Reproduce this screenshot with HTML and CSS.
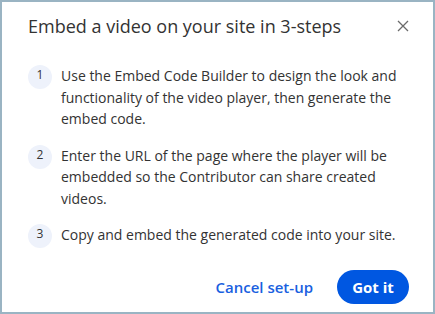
FILE: index.html
```html
<!DOCTYPE html>
<html>
<head>
<meta charset="utf-8">
<link rel="stylesheet" href="styles.css">
</head>
<body>
<div class="frame">
  <div class="header">
    <h1 class="title">Embed a video on your site in 3-steps</h1>
    <button class="close" aria-label="Close">
      <svg width="12" height="12" viewBox="0 0 12 12"><path d="M1 1L11 11M11 1L1 11" stroke="#6b6b6b" stroke-width="1.3" fill="none"/></svg>
    </button>
  </div>
  <ol class="steps">
    <li class="step"><span class="num">1</span><p class="text">Use the Embed Code Builder to design the look and functionality of the video player, then generate the embed code.</p></li>
    <li class="step"><span class="num">2</span><p class="text">Enter the URL of the page where the player will be embedded so the Contributor can share created videos.</p></li>
    <li class="step"><span class="num">3</span><p class="text">Copy and embed the generated code into your site.</p></li>
  </ol>
  <div class="footer">
    <button class="cancel">Cancel set-up</button>
    <button class="ok">Got it</button>
  </div>
</div>
</body>
</html>
```
FILE: styles.css
```css
html, body {
  margin: 0;
  padding: 0;
  background: #ffffff;
}
.frame {
  box-sizing: border-box;
  width: 435px;
  height: 314px;
  border: 2px solid #9ab4c3;
  background: #ffffff;
  font-family: "Open Sans", "Noto Sans", sans-serif;
  color: #333333;
  display: flex;
  flex-direction: column;
}
.header {
  display: flex;
  align-items: center;
  justify-content: space-between;
  padding: 10px 22px 0 26px;
}
.title {
  margin: 0;
  font-size: 18px;
  font-weight: 400;
  line-height: 28px;
  color: #333333;
}
.close {
  border: 0;
  background: none;
  padding: 0;
  width: 16px;
  height: 16px;
  display: flex;
  align-items: center;
  justify-content: center;
  cursor: pointer;
}
.steps {
  list-style: none;
  margin: 0;
  padding: 25px 26px 0 26px;
  display: flex;
  flex-direction: column;
  gap: 15px;
}
.step {
  display: flex;
  align-items: flex-start;
  gap: 9px;
}
.num {
  flex: none;
  width: 24px;
  height: 24px;
  border-radius: 50%;
  background: #eef2fb;
  font-size: 12px;
  line-height: 20px;
  text-align: center;
  color: #333333;
}
.text {
  margin: 0;
  font-size: 14px;
  line-height: 21.5px;
  color: #333333;
}
.footer {
  margin-top: auto;
  display: flex;
  align-items: center;
  justify-content: flex-end;
  gap: 24px;
  padding: 0 24px 8px 0;
}
.cancel {
  border: 0;
  background: none;
  padding: 0;
  font-family: inherit;
  font-size: 15px;
  font-weight: 600;
  color: #1a5fe0;
}
.ok {
  border: 0;
  height: 34px;
  width: 72px;
  border-radius: 17px;
  background: #0057e1;
  color: #ffffff;
  font-family: inherit;
  font-size: 15px;
  font-weight: 700;
  padding: 0;
}
```
